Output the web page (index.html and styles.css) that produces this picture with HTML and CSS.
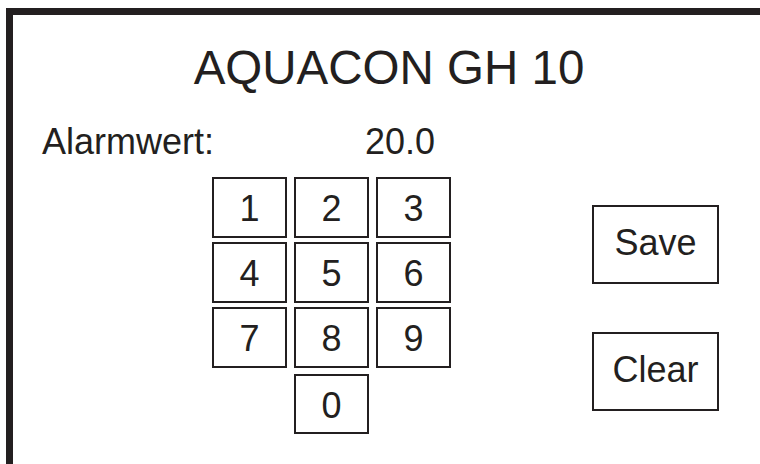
FILE: index.html
```
<!DOCTYPE html>
<html lang="de">
<head>
  <meta charset="UTF-8">
  <title>AQUACON GH 10</title>
  <link rel="stylesheet" href="styles.css">
</head>
<body>

  <div class="frame">
    <h1 class="title">AQUACON GH 10</h1>

    <!-- Alarmwert -->
    <div class="alarm-row">
      <span class="alarm-label">Alarmwert:</span>
      <span class="alarm-value" id="alarmValue">20.0</span>
    </div>

    <div class="panel">
      <!-- Keypad -->
      <div class="keypad">
        <button class="key">1</button>
        <button class="key">2</button>
        <button class="key">3</button>
        <button class="key">4</button>
        <button class="key">5</button>
        <button class="key">6</button>
        <button class="key">7</button>
        <button class="key">8</button>
        <button class="key">9</button>
        <button class="key key-zero">0</button>
      </div>

      <!-- Actions -->
      <div class="actions">
        <button class="action">Save</button>
        <button class="action">Clear</button>
      </div>
    </div>
  </div>

</body>
</html>
```

FILE: styles.css
```
html, body {
  margin: 0;
  background: #fff;
  overflow: hidden;
}
body {
  font-family: 'Liberation Sans', Arial, sans-serif;
  color: #231f20;
}
/* frame continues past the right and bottom edge of the screen */
.frame {
  box-sizing: border-box;
  width: 754px;
  height: 456px;
  margin: 8px 0 0 6px;
  border-top: 7px solid #231f20;
  border-left: 7px solid #231f20;
}
.title {
  margin: 29px 0 0;
  padding-left: 5px;
  font-size: 47.5px;
  font-weight: normal;
  line-height: 47px;
  text-align: center;
}
.alarm-row {
  display: flex;
  margin-top: 33px;
  padding-left: 29px;
  font-size: 36px;
  line-height: 1;
}
.alarm-label {
  width: 323px;
}
.panel {
  display: flex;
  margin-top: 17px;
  padding-left: 199px;
}
.keypad {
  display: grid;
  grid-template-columns: repeat(3, 75px);
  grid-auto-rows: 61px;
  column-gap: 7px;
  row-gap: 4px;
}
.key, .action {
  box-sizing: border-box;
  display: flex;
  align-items: center;
  justify-content: center;
  padding: 0;
  background: #fff;
  border: 2px solid #231f20;
  color: #231f20;
  font-family: inherit;
  line-height: 1;
  cursor: pointer;
}
.key {
  padding-top: 3px;
  font-size: 36px;
}
.key-zero {
  grid-column: 2;
  margin-top: 2px;
  height: 60px;
}
.actions {
  display: flex;
  flex-direction: column;
  gap: 48px;
  margin: 28px 0 0 141px;
}
.action {
  width: 127px;
  height: 79px;
  padding-bottom: 4px;
  font-size: 36px;
}
```
